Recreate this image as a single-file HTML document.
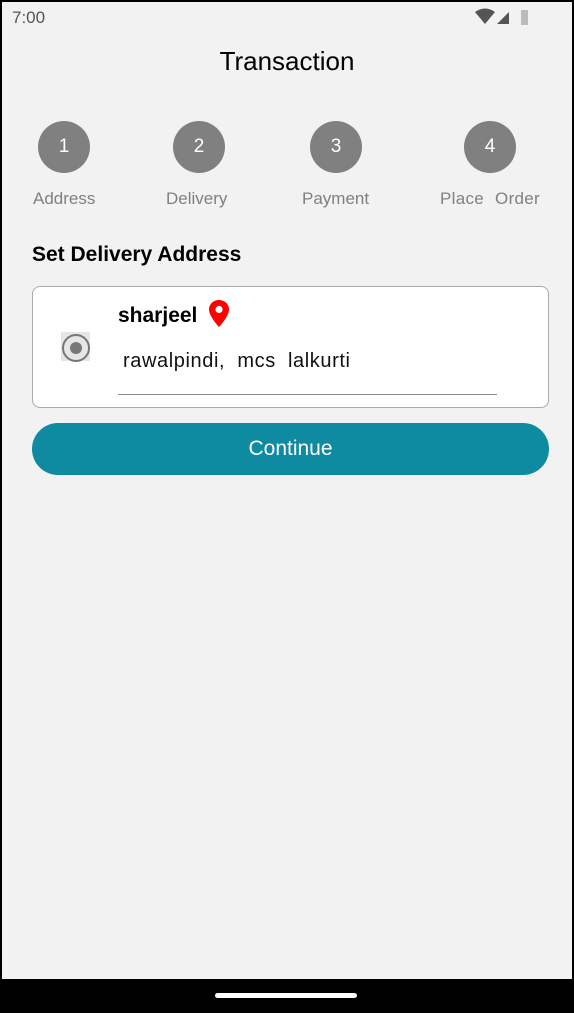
<!DOCTYPE html><html><head><style>
body{margin:0;width:574px;height:1013px;background:#000;position:relative;overflow:hidden;font-family:"Liberation Sans","DejaVu Sans",sans-serif}
.scr{position:absolute;left:2px;top:2px;width:570px;height:977px;background:#f2f2f2}
.a{position:absolute}
.c{position:absolute;width:52px;height:52px;border-radius:50%;background:#808080;color:#fff;font-size:19px;text-align:center;line-height:52px;top:121px}
.l{position:absolute;top:189px;color:#808080;font-size:17px;white-space:nowrap}
</style></head><body>
<div class="scr"></div>
<div class="a" style="left:12px;top:8px;font-size:17px;color:#555">7:00</div>
<svg class="a" style="left:475px;top:8px" width="60" height="18"><path d="M0 4 Q10 -3 20 4 L10 16Z" fill="#555"/><path d="M22 16 L34 4 L34 16Z" fill="#555"/><rect x="46" y="2" width="7" height="15" fill="#bbb"/></svg>
<div class="a" style="left:0;width:574px;top:46px;text-align:center;font-size:26px;color:#000">Transaction</div>
<div class="c" style="left:38px">1</div><div class="c" style="left:173px">2</div><div class="c" style="left:310px">3</div><div class="c" style="left:464px">4</div>
<div class="l" style="left:33px">Address</div><div class="l" style="left:166px">Delivery</div><div class="l" style="left:302px">Payment</div><div class="l" style="left:440px;word-spacing:6px;letter-spacing:0.3px">Place Order</div>
<div class="a" style="left:32px;top:243px;font-size:21px;font-weight:bold;color:#000">Set Delivery Address</div>
<div class="a" style="left:32px;top:286px;width:515px;height:120px;background:#fff;border:1px solid #aaa;border-radius:8px"></div>
<div class="a" style="left:61px;top:332px;width:29px;height:29px;background:#e6e6e6"></div>
<div class="a" style="left:62px;top:334px;border:2.5px solid #777;border-radius:50%;box-sizing:border-box;width:28px;height:28px"></div>
<div class="a" style="left:70px;top:342px;width:12px;height:12px;border-radius:50%;background:#777"></div>
<div class="a" style="left:118px;top:304px;font-size:21px;font-weight:bold;color:#000">sharjeel</div>
<svg class="a" style="left:208px;top:299px" width="22" height="29" viewBox="0 0 22 29"><path d="M11 1C5.5 1 1 5.2 1 10.5 1 17.5 11 28 11 28S21 17.5 21 10.5C21 5.2 16.5 1 11 1Z" fill="#f00"/><circle cx="11" cy="10.5" r="3.6" fill="#fff"/></svg>
<div class="a" style="left:123px;top:350px;font-size:20px;color:#111;word-spacing:6px;letter-spacing:0.6px">rawalpindi, mcs lalkurti</div>
<div class="a" style="left:118px;top:394px;width:379px;height:1px;background:#888"></div>
<div class="a" style="left:32px;top:423px;width:517px;height:52px;border-radius:26px;background:#0e8aa1;color:#fff;font-size:21px;text-align:center;line-height:52px">Continue</div>
<div class="a" style="left:215px;top:993px;width:142px;height:5px;border-radius:3px;background:#fff"></div>
</body></html>
